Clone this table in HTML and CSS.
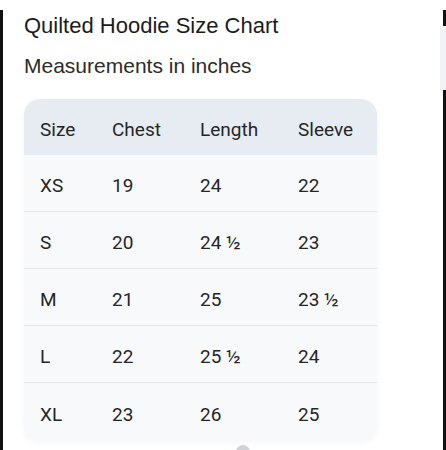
FILE: index.html
```html
<!DOCTYPE html>
<html>
<head>
<meta charset="utf-8">
<link rel="stylesheet" href="styles.css">
</head>
<body>
<div class="frame">
  <div class="edge-left"></div>
  <main class="content">
    <h1 class="title">Quilted Hoodie Size Chart</h1>
    <p class="subtitle">Measurements in inches</p>
    <div class="table">
      <div class="row head"><span>Size</span><span>Chest</span><span>Length</span><span>Sleeve</span></div>
      <div class="row"><span>XS</span><span>19</span><span>24</span><span>22</span></div>
      <div class="row"><span>S</span><span>20</span><span>24 ½</span><span>23</span></div>
      <div class="row"><span>M</span><span>21</span><span>25</span><span>23 ½</span></div>
      <div class="row"><span>L</span><span>22</span><span>25 ½</span><span>24</span></div>
      <div class="row last"><span>XL</span><span>23</span><span>26</span><span>25</span></div>
    </div>
    <div class="dot"></div>
  </main>
  <div class="edge-right">
    <div class="er-top"></div>
    <div class="er-gray"></div>
    <div class="er-bottom"></div>
  </div>
</div>
</body>
</html>
```
FILE: styles.css
```css
html, body {
  margin: 0;
  padding: 0;
  background: #ffffff;
  height: 450px;
  overflow: hidden;
}
.frame {
  display: flex;
  height: 450px;
}
.edge-left {
  width: 3px;
  margin-top: 10px;
  background: #111;
}
.content {
  flex: 1;
  padding-left: 21px;
  position: relative;
}
.title {
  margin: 13px 0 0;
  font-family: "Liberation Sans", Arial, sans-serif;
  font-weight: 400;
  font-size: 22px;
  line-height: 26px;
  color: #1c1c1c;
}
.subtitle {
  margin: 14px 0 0;
  font-family: "Liberation Sans", Arial, sans-serif;
  font-size: 21px;
  line-height: 26px;
  color: #2c2c2c;
}
.table {
  margin-top: 20px;
  width: 353px;
  border-radius: 16px;
  overflow: hidden;
  background: #f8f9fb;
  box-shadow: 0 3px 6px rgba(0, 0, 0, 0.04);
  font-family: Roboto, "Liberation Sans", sans-serif;
  font-size: 19px;
  color: #262626;
}
.row {
  display: grid;
  grid-template-columns: 72px 88px 98px 1fr;
  align-items: center;
  box-sizing: border-box;
  height: 57px;
  padding-top: 5px;
  padding-left: 16px;
  border-bottom: 1px solid #e2e4e8;
}
.row.head {
  background: #e7ecf3;
  border-bottom: none;
  height: 56px;
}
.row.last {
  border-bottom: none;
}
.dot {
  position: absolute;
  left: 233px;
  top: 445px;
  width: 14px;
  height: 14px;
  border-radius: 50%;
  background: #cfd3d8;
}
.edge-right {
  width: 6px;
  display: flex;
  flex-direction: column;
  align-items: flex-end;
}
.er-top {
  width: 3px;
  height: 16px;
  margin-top: 10px;
  background: #111;
}
.er-gray {
  width: 6px;
  height: 64px;
  background: #f1f3f6;
}
.er-bottom {
  width: 3px;
  flex: 1;
  background: #111;
}
```
